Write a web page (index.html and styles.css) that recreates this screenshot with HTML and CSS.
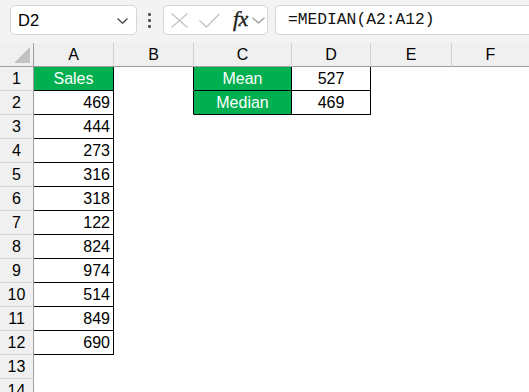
FILE: index.html
```html
<!DOCTYPE html>
<html>
<head>
<meta charset="utf-8">
<link rel="stylesheet" href="styles.css">
</head>
<body>
<div class="app">
  <div class="toolbar">
    <div class="namebox">
      <span class="ref">D2</span>
      <svg class="chev" width="11" height="6" viewBox="0 0 11 6"><polyline points="0.5,0.5 5.5,5.2 10.5,0.5" fill="none" stroke="#444" stroke-width="1.3"/></svg>
    </div>
    <div class="dots"><i></i><i></i><i></i></div>
    <div class="fnbox">
      <svg class="xicon" width="17" height="15" viewBox="0 0 17 15"><line x1="0.5" y1="0.5" x2="16.5" y2="14.5" stroke="#c4c4c4" stroke-width="1.3"/><line x1="16.5" y1="0.5" x2="0.5" y2="14.5" stroke="#c4c4c4" stroke-width="1.3"/></svg>
      <svg class="check" width="21" height="15" viewBox="0 0 21 15"><polyline points="0.5,7.5 7.5,14 20.5,0.7" fill="none" stroke="#c4c4c4" stroke-width="1.3"/></svg>
      <span class="fx">fx</span>
      <svg class="chev2" width="13" height="7" viewBox="0 0 13 7"><polyline points="0.5,0.8 6.5,6 12.5,0.8" fill="none" stroke="#999" stroke-width="1.2"/></svg>
    </div>
    <div class="formula">=MEDIAN(A2:A12)</div>
  </div>
  <div class="sheet">
    <div class="ch corner"><span class="tri"></span></div>
    <div class="ch">A</div>
    <div class="ch">B</div>
    <div class="ch">C</div>
    <div class="ch">D</div>
    <div class="ch">E</div>
    <div class="ch last">F</div>

    <div class="rh">1</div><div class="c bd green center">Sales</div><div class="c br"></div><div class="c bd green center">Mean</div><div class="c bd center">527</div><div class="c"></div><div class="c"></div>
    <div class="rh">2</div><div class="c bd num">469</div><div class="c br"></div><div class="c bd green center">Median</div><div class="c bd center">469</div><div class="c"></div><div class="c"></div>
    <div class="rh">3</div><div class="c bd num">444</div><div class="c"></div><div class="c"></div><div class="c"></div><div class="c"></div><div class="c"></div>
    <div class="rh">4</div><div class="c bd num">273</div><div class="c"></div><div class="c"></div><div class="c"></div><div class="c"></div><div class="c"></div>
    <div class="rh">5</div><div class="c bd num">316</div><div class="c"></div><div class="c"></div><div class="c"></div><div class="c"></div><div class="c"></div>
    <div class="rh">6</div><div class="c bd num">318</div><div class="c"></div><div class="c"></div><div class="c"></div><div class="c"></div><div class="c"></div>
    <div class="rh">7</div><div class="c bd num">122</div><div class="c"></div><div class="c"></div><div class="c"></div><div class="c"></div><div class="c"></div>
    <div class="rh">8</div><div class="c bd num">824</div><div class="c"></div><div class="c"></div><div class="c"></div><div class="c"></div><div class="c"></div>
    <div class="rh">9</div><div class="c bd num">974</div><div class="c"></div><div class="c"></div><div class="c"></div><div class="c"></div><div class="c"></div>
    <div class="rh">10</div><div class="c bd num">514</div><div class="c"></div><div class="c"></div><div class="c"></div><div class="c"></div><div class="c"></div>
    <div class="rh">11</div><div class="c bd num">849</div><div class="c"></div><div class="c"></div><div class="c"></div><div class="c"></div><div class="c"></div>
    <div class="rh">12</div><div class="c bd num">690</div><div class="c"></div><div class="c"></div><div class="c"></div><div class="c"></div><div class="c"></div>
    <div class="rh">13</div><div class="c"></div><div class="c"></div><div class="c"></div><div class="c"></div><div class="c"></div><div class="c"></div>
    <div class="rh">14</div><div class="c"></div><div class="c"></div><div class="c"></div><div class="c"></div><div class="c"></div><div class="c"></div>
  </div>
</div>
</body>
</html>
```

FILE: styles.css
```css
* { box-sizing: border-box; margin: 0; padding: 0; }
html, body { width: 529px; height: 392px; overflow: hidden; background: #fff; }
body { font-family: "Liberation Sans", Arial, sans-serif; color: #000; }

.app { width: 529px; height: 392px; overflow: hidden; }

.toolbar {
  height: 43px;
  background: #f3f3f3;
  display: flex;
  align-items: flex-start;
  padding-top: 5px;
}

.namebox {
  margin-left: 10px;
  width: 127px;
  height: 30px;
  background: #fff;
  border: 1px solid #d6d6d6;
  border-radius: 5px;
  display: flex;
  align-items: center;
  justify-content: space-between;
  padding: 0 8px 0 7px;
}
.ref { font-size: 16.5px; line-height: 1; }
.chev { margin-top: 1px; }

.dots {
  width: 26px;
  height: 30px;
  display: flex;
  flex-direction: column;
  align-items: center;
  justify-content: center;
  gap: 3px;
  padding-right: 1px;
}
.dots i { display: block; width: 3px; height: 3px; background: #555; border-radius: 1px; }

.fnbox {
  width: 105px;
  height: 30px;
  background: #fff;
  border: 1px solid #d6d6d6;
  border-radius: 5px;
  display: flex;
  align-items: center;
  padding-left: 7px;
}
.xicon { margin-right: 11px; }
.check { margin-right: 13px; }
.fx {
  font-family: "Liberation Serif", "Times New Roman", serif;
  font-style: italic;
  font-size: 22px;
  line-height: 1;
  color: #222;
  margin-top: -3px;
  margin-right: 4px;
  letter-spacing: -0.5px;
  -webkit-text-stroke: 0.4px #222;
}

.formula {
  margin-left: 7px;
  flex: 1;
  height: 30px;
  background: #fff;
  border: 1px solid #d6d6d6;
  border-right: none;
  border-radius: 5px 0 0 5px;
  font-family: "Liberation Mono", "Courier New", monospace;
  font-size: 16.3px;
  line-height: 28px;
  padding-left: 12px;
  color: #111;
}

.sheet {
  display: grid;
  grid-template-columns: 34px 80px 80px 98px 79px 81px 1fr;
  grid-auto-rows: 24px;
}

.ch {
  background: #f0f0f0;
  border-right: 1px solid #cfcfcf;
  border-bottom: 1px solid #9e9e9e;
  display: flex;
  align-items: center;
  justify-content: center;
  font-size: 16px;
}
.ch.last { border-right: none; }
.corner { position: relative; border-right-color: #9e9e9e; }
.tri {
  position: absolute;
  right: 3px;
  bottom: 3px;
  width: 0;
  height: 0;
  border-left: 16px solid transparent;
  border-bottom: 16px solid #c2c2c2;
}

.rh {
  background: #f0f0f0;
  border-right: 1px solid #9e9e9e;
  border-bottom: 1px solid #d4d4d4;
  display: flex;
  align-items: center;
  justify-content: center;
  font-size: 16px;
}

.c {
  background: #fff;
  border-right: 1px solid transparent;
  border-bottom: 1px solid transparent;
  display: flex;
  align-items: center;
  font-size: 16px;
}
.c.bd { border-right-color: #000; border-bottom-color: #000; }
.c.br { border-right-color: #000; }
.green { background: #00b050; color: #fff; }
.center { justify-content: center; }
.num { justify-content: flex-end; padding-right: 3px; }
```
